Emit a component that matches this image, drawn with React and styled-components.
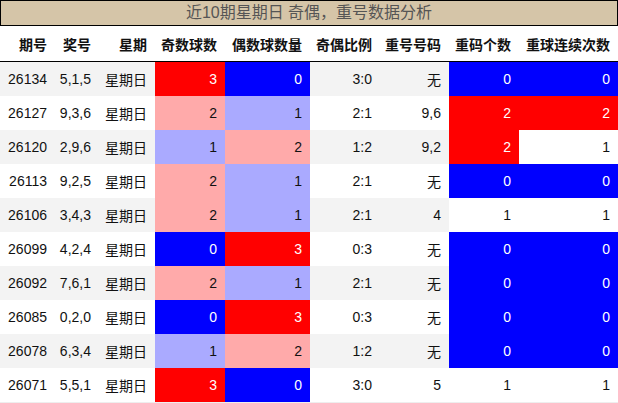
import React from "react";
import styled, { createGlobalStyle } from "styled-components";

const GlobalStyle = createGlobalStyle`
  html, body {
    margin: 0;
    padding: 0;
    background: #fff;
  }
  body {
    font-family: "Liberation Sans", "Noto Sans CJK SC", sans-serif;
    color: #111;
  }
`;

const COLS = "55px 44px 56px 70px 85px 70px 69px 70px 99px";

const Wrapper = styled.div`
  width: 618px;
  border-bottom: 1px solid #eeeeee;
`;

const Title = styled.div`
  height: 24px;
  border: 1px solid #000;
  background: #d5c5a8;
  color: #555;
  font-size: 16px;
  line-height: 24px;
  text-align: center;
`;

const HeaderRow = styled.div`
  display: grid;
  grid-template-columns: ${COLS};
  height: 35px;
  border-bottom: 1px solid #000;
  background: #fff;
`;

const HeadCell = styled.div`
  display: flex;
  align-items: center;
  justify-content: flex-end;
  padding-right: 8px;
  font-size: 14px;
  font-weight: bold;
  white-space: nowrap;
  color: #111;
`;

const Row = styled.div`
  display: grid;
  grid-template-columns: ${COLS};
  height: 34px;
  background: ${(p) => (p.$striped ? "#f3f3f3" : "#ffffff")};
`;

const palette = {
  red: { bg: "#ff0000", fg: "#ffffff" },
  blue: { bg: "#0000ff", fg: "#ffffff" },
  lred: { bg: "#ffaaaa", fg: "#111111" },
  lblue: { bg: "#aaaaff", fg: "#111111" },
  white: { bg: "#ffffff", fg: "#111111" },
};

const Cell = styled.div`
  display: flex;
  align-items: center;
  justify-content: flex-end;
  padding-right: 8px;
  font-size: 14px;
  white-space: nowrap;
  background: ${(p) => (p.$tone ? palette[p.$tone].bg : "transparent")};
  color: ${(p) => (p.$tone ? palette[p.$tone].fg : "#111")};
`;

const headers = ["期号", "奖号", "星期", "奇数球数", "偶数球数量", "奇偶比例", "重号号码", "重码个数", "重球连续次数"];

// 3 -> red, 0 -> blue, 2 -> light red, 1 -> light blue
const tone = (n) => {
  if (n === 3) return "red";
  if (n === 0) return "blue";
  if (n === 2) return "lred";
  return "lblue";
};

const repTone = (n) => {
  if (n === 0) return "blue";
  if (n === 2) return "red";
  return "white";
};

const rows = [
  ["26134", "5,1,5", 3, 0, "3:0", "无", 0, 0],
  ["26127", "9,3,6", 2, 1, "2:1", "9,6", 2, 2],
  ["26120", "2,9,6", 1, 2, "1:2", "9,2", 2, 1],
  ["26113", "9,2,5", 2, 1, "2:1", "无", 0, 0],
  ["26106", "3,4,3", 2, 1, "2:1", "4", 1, 1],
  ["26099", "4,2,4", 0, 3, "0:3", "无", 0, 0],
  ["26092", "7,6,1", 2, 1, "2:1", "无", 0, 0],
  ["26085", "0,2,0", 0, 3, "0:3", "无", 0, 0],
  ["26078", "6,3,4", 1, 2, "1:2", "无", 0, 0],
  ["26071", "5,5,1", 3, 0, "3:0", "5", 1, 1],
];

export default function App() {
  return (
    <>
      <GlobalStyle />
      <Wrapper>
        <Title>近10期星期日 奇偶，重号数据分析</Title>
        <HeaderRow>
          {headers.map((h) => (
            <HeadCell key={h}>{h}</HeadCell>
          ))}
        </HeaderRow>
        {rows.map(([issue, nums, odd, even, ratio, rep, repCount, streak], i) => (
          <Row key={issue} $striped={i % 2 === 0}>
            <Cell>{issue}</Cell>
            <Cell>{nums}</Cell>
            <Cell>星期日</Cell>
            <Cell $tone={tone(odd)}>{odd}</Cell>
            <Cell $tone={tone(even)}>{even}</Cell>
            <Cell>{ratio}</Cell>
            <Cell>{rep}</Cell>
            <Cell $tone={repTone(repCount)}>{repCount}</Cell>
            <Cell $tone={repTone(streak)}>{streak}</Cell>
          </Row>
        ))}
      </Wrapper>
    </>
  );
}
